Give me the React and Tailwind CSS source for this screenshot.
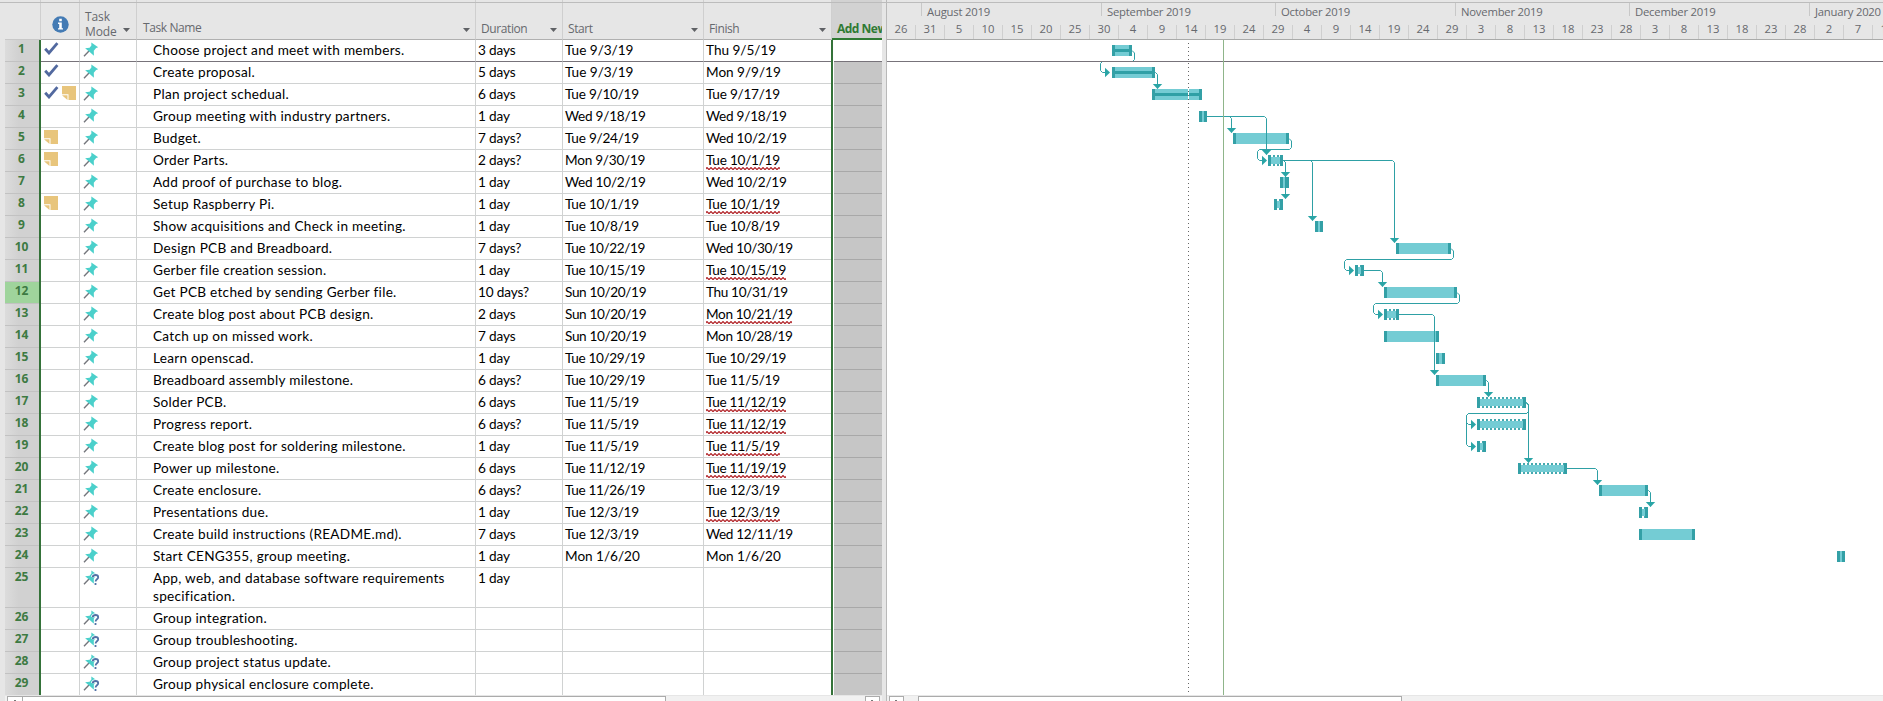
const TASKS = [
  ["Choose project and meet with members.", "3 days", "Tue 9/3/19", "Thu 9/5/19", "c"],
  ["Create proposal.", "5 days", "Tue 9/3/19", "Mon 9/9/19", "c"],
  ["Plan project schedual.", "6 days", "Tue 9/10/19", "Tue 9/17/19", "cn"],
  ["Group meeting with industry partners.", "1 day", "Wed 9/18/19", "Wed 9/18/19", ""],
  ["Budget.", "7 days?", "Tue 9/24/19", "Wed 10/2/19", "n"],
  ["Order Parts.", "2 days?", "Mon 9/30/19", "Tue 10/1/19", "nw"],
  ["Add proof of purchase to blog.", "1 day", "Wed 10/2/19", "Wed 10/2/19", ""],
  ["Setup Raspberry Pi.", "1 day", "Tue 10/1/19", "Tue 10/1/19", "nw"],
  ["Show acquisitions and Check in meeting.", "1 day", "Tue 10/8/19", "Tue 10/8/19", ""],
  ["Design PCB and Breadboard.", "7 days?", "Tue 10/22/19", "Wed 10/30/19", ""],
  ["Gerber file creation session.", "1 day", "Tue 10/15/19", "Tue 10/15/19", "w"],
  ["Get PCB etched by sending Gerber file.", "10 days?", "Sun 10/20/19", "Thu 10/31/19", ""],
  ["Create blog post about PCB design.", "2 days", "Sun 10/20/19", "Mon 10/21/19", "w"],
  ["Catch up on missed work.", "7 days", "Sun 10/20/19", "Mon 10/28/19", ""],
  ["Learn openscad.", "1 day", "Tue 10/29/19", "Tue 10/29/19", ""],
  ["Breadboard assembly milestone.", "6 days?", "Tue 10/29/19", "Tue 11/5/19", ""],
  ["Solder PCB.", "6 days", "Tue 11/5/19", "Tue 11/12/19", "w"],
  ["Progress report.", "6 days?", "Tue 11/5/19", "Tue 11/12/19", "w"],
  ["Create blog post for soldering milestone.", "1 day", "Tue 11/5/19", "Tue 11/5/19", "w"],
  ["Power up milestone.", "6 days", "Tue 11/12/19", "Tue 11/19/19", "w"],
  ["Create enclosure.", "6 days?", "Tue 11/26/19", "Tue 12/3/19", ""],
  ["Presentations due.", "1 day", "Tue 12/3/19", "Tue 12/3/19", "w"],
  ["Create build instructions (README.md).", "7 days", "Tue 12/3/19", "Wed 12/11/19", ""],
  ["Start CENG355, group meeting.", "1 day", "Mon 1/6/20", "Mon 1/6/20", ""],
  ["App, web, and database software requirements specification.", "1 day", "", "", "q"],
  ["Group integration.", "", "", "", "q"],
  ["Group troubleshooting.", "", "", "", "q"],
  ["Group project status update.", "", "", "", "q"],
  ["Group physical enclosure complete.", "", "", "", "q"],
];

// [row, start x, end x, style]
const BARS = [
  [1, 1112, 1132, "progress"], [2, 1112, 1155, "progress"], [3, 1152, 1202, "progress"],
  [4, 1199, 1207], [5, 1233, 1289], [6, 1268, 1283, "dotted"], [7, 1280, 1289],
  [8, 1274, 1283, "dotted"], [9, 1315, 1323], [10, 1396, 1451], [11, 1355, 1364, "dotted"],
  [12, 1384, 1457], [13, 1384, 1399, "dotted"], [14, 1384, 1439], [15, 1436, 1445],
  [16, 1436, 1486], [17, 1477, 1526, "dotted"], [18, 1477, 1526, "dotted"],
  [19, 1477, 1486, "dotted"], [20, 1518, 1567, "dotted"], [21, 1599, 1648],
  [22, 1639, 1648, "dotted"], [23, 1639, 1695], [24, 1837, 1845],
];

const mid = (row) => 50.5 + 22 * (row - 1);

// Finish-to-start links that turn down: [from row, from x, x, to row]
const DOWN = [
  [2, 1155, 1157.5, 3], [4, 1207, 1231.5, 5], [4, 1207, 1266.5, 6],
  [6, 1283, 1285.5, 7], [6, 1283, 1285.5, 8], [6, 1283, 1312.5, 9], [6, 1283, 1394.5, 10],
  [11, 1364, 1382.5, 12], [13, 1399, 1434.5, 16], [16, 1486, 1488.5, 17],
  [17, 1526, 1528.5, 20], [20, 1567, 1597.5, 21], [21, 1648, 1650.5, 22],
];

// Links that loop back: [from row, from x, right x, left x, to row]
const BACK = [
  [1, 1132, 1134.5, 1100.5, 2], [5, 1289, 1291.5, 1257.5, 6], [10, 1451, 1453.5, 1344.5, 11],
  [12, 1457, 1459.5, 1373.5, 13], [17, 1526, 1528.5, 1466.5, 18], [17, 1526, 1528.5, 1466.5, 19],
];

const DAYS = [26, 31, 5, 10, 15, 20, 25, 30, 4, 9, 14, 19, 24, 29, 4, 9, 14, 19, 24, 29, 3, 8, 13, 18, 23, 28, 3, 8, 13, 18, 23, 28, 2, 7, 12];
const MONTHS = [
  ["August 2019", "w-[180px]"], ["September 2019", "w-[174px]"], ["October 2019", "w-[180px]"],
  ["November 2019", "w-[174px]"], ["December 2019", "w-[180px]"], ["January 2020", "w-[74px]"],
];

const Caret = () => (
  <svg width="7" height="4" viewBox="0 0 7 4" className="shrink-0"><path d="M0 0h7L3.5 4z" fill="#5f6165" /></svg>
);

const Check = () => (
  <svg width="15" height="13" viewBox="0 0 15 13" className="shrink-0">
    <path d="M1.2 6.8 5 11 13.4 1.2" fill="none" stroke="#52699f" strokeWidth="2.8" />
  </svg>
);

const Note = () => (
  <svg width="14" height="14" viewBox="0 0 14 14" className="shrink-0">
    <path d="M0 0h14v14H6.5V8.2H0z" fill="#e8c57c" />
    <path d="M0 9.2h5.5v4.8z" fill="#e8c57c" />
  </svg>
);

const Pin = ({ query }) => (
  <svg width="17" height="16" viewBox="0 0 17 16" className="shrink-0">
    <path d="M1 14.2 6.2 8.8" stroke="#74767c" strokeWidth="1.4" />
    <path d="M8.3.4 15.2 5.3 13.1 6 10.8 8.8l.1 5-3.6-3.4-5.2-4.2 4.5-.5 1.8-2.2z" fill="#4bd0cb" />
    {query && (
      <path d="M9.6 7.2c.4-1.5 1.5-2.2 2.9-2.2 1.6 0 2.7.9 2.7 2.3 0 2-2.6 2-2.6 4.2M12.5 13v1.9" fill="none" stroke="#fff" strokeWidth="3.6" />
    )}
    {query && (
      <path d="M9.6 7.2c.4-1.5 1.5-2.2 2.9-2.2 1.6 0 2.7.9 2.7 2.3 0 2-2.6 2-2.6 4.2M12.5 13v1.9" fill="none" stroke="#5272a6" strokeWidth="1.8" />
    )}
  </svg>
);

const Info = () => (
  <svg width="17" height="17" viewBox="0 0 17 17">
    <circle cx="8.5" cy="8.5" r="8.2" fill="#447bb4" />
    <path d="M7.2 2.8h2.6v2.4H7.2zM6 6.6h3.8v5.6H11v1.4H6v-1.4h1.2V8H6z" fill="#fff" />
  </svg>
);

function Squiggle() {
  return (
    <svg className="absolute left-0 top-[16px] h-[3px] w-full">
      <defs>
        <pattern id="zigzag" width="4" height="3" patternUnits="userSpaceOnUse">
          <path d="M-1 2.6 1 .6 3 2.6 5 .6" fill="none" stroke="#b01f24" strokeWidth="1.25" />
        </pattern>
      </defs>
      <rect width="100%" height="3" fill="url(#zigzag)" />
    </svg>
  );
}

function Row({ task, n }) {
  const [name, duration, start, finish, flags] = task;
  const tall = n === 25;
  const line = n === 1 ? "border-b-[#77737a]" : n === 29 ? "border-b-transparent" : "border-b-[#d0d2d2]";
  const cell = `border-b ${line}`;
  const date = (d) => (d.length > 11 ? "tracking-[-0.36px]" : d.length > 10 ? "tracking-[-0.24px]" : "tracking-[-0.02px]");
  return (
    <div className={`flex shrink-0 ${tall ? "h-[40px]" : "h-[22px]"}`}>
      <div className={`w-[34px] border-b pr-px text-center font-['Open_Sans',sans-serif] text-[12px] font-bold leading-[18px] tracking-normal text-[#3d7a42] ${n === 12 ? "border-[#c2c2c2] bg-[#9fd49c]" : "border-[#c2c2c2] bg-linear-to-r from-[#dcdcdc] to-[#d1d1d1] to-40%"}`}>{n}</div>
      <div className="w-[2px] bg-[#347239]" />
      <div className={`flex w-[39px] gap-[3px] border-r border-r-[#d0d2d2] pl-[3px] pt-[2px] ${cell}`}>
        {flags.includes("c") && <Check />}
        {flags.includes("n") && <Note />}
      </div>
      <div className={`w-[57px] border-r border-r-[#d0d2d2] pl-[3px] pt-[2px] ${cell}`}><Pin query={flags.includes("q")} /></div>
      <div className={`w-[339px] border-r border-r-[#d0d2d2] pl-[16px] pr-[20px] pt-px tracking-[0.28px] ${cell}`}>{name}</div>
      <div className={`w-[87px] border-r border-r-[#d0d2d2] pl-[2px] pt-px tracking-[-0.15px] ${cell}`}>{duration}</div>
      <div className={`w-[141px] border-r border-r-[#d0d2d2] pl-[2px] pt-px ${date(start)} ${cell}`}>{start}</div>
      <div className={`w-[127px] pl-[2px] pt-px ${date(finish)} ${cell}`}>
        <span className="relative inline-block">{finish}{flags.includes("w") && <Squiggle />}</span>
      </div>
      <div className="w-[2px] bg-[#347239]" />
      <div className="w-px bg-white" />
      <div className={`w-[48px] border-b ${n === 1 ? "border-[#77737a] bg-white" : n === 29 ? "border-[#c6c6c6] bg-[#c6c6c6]" : "border-[#a8a8a8] bg-[#c6c6c6]"}`} />
    </div>
  );
}

function Table() {
  const head = "flex items-end justify-between border-r border-r-[#cfcfcf] border-b border-b-[#b0b0b0] text-[#66696e]";
  return (
    <div className="flex h-[701px] w-[882px] flex-col overflow-hidden">
      <div className="flex h-[40px] shrink-0 pl-[5px] font-['Open_Sans',sans-serif] text-[12px] leading-[15px] tracking-[-0.4px]">
        <div className="w-[36px] border-r border-r-[#cfcfcf] border-b border-b-[#c8c8c8]" />
        <div className={`${head} w-[39px]`}><div className="pb-[6px] pl-[11px]"><Info /></div></div>
        <div className={`${head} w-[57px] pb-0 pl-[5px] pr-[6px]`}><span className="tracking-[-0.1px]">Task<br />Mode</span><div className="pb-[7px]"><Caret /></div></div>
        <div className={`${head} w-[339px] pb-[4px] pl-[6px] pr-[5px]`}><span>Task Name</span><div className="pb-[3px]"><Caret /></div></div>
        <div className={`${head} w-[87px] pb-[3px] pl-[5px] pr-[5px]`}><span>Duration</span><div className="pb-[4px]"><Caret /></div></div>
        <div className={`${head} w-[141px] pb-[3px] pl-[5px] pr-[5px]`}><span>Start</span><div className="pb-[4px]"><Caret /></div></div>
        <div className={`${head} w-[128px] pb-[3px] pl-[5px] pr-[5px]`}><span>Finish</span><div className="pb-[4px]"><Caret /></div></div>
        <div className="flex w-[50px] items-end overflow-hidden whitespace-nowrap border-b-2 border-[#2f7a33] bg-[#d2d2d2] pb-[2px] pl-[5px] font-bold tracking-[-0.5px] text-[#2f7a33]">Add New</div>
      </div>
      <div className="ml-[5px] flex h-[655px] shrink-0 flex-col overflow-hidden bg-white font-[Lato,Carlito,sans-serif] text-[13.6px] leading-[18px] text-black">
        {TASKS.map((t, i) => <Row key={i} task={t} n={i + 1} />)}
      </div>
      <div className="ml-[5px] mt-px flex h-[5px] bg-[#f1f1f1] pl-[2px]">
        <div className="w-[16px] border border-b-0 border-[#ababab] bg-white pl-[6px] pt-[3px]"><div className="h-px w-[2px] bg-[#777]" /></div>
        <div className="w-[643px] border-r border-t border-[#ababab] bg-white" />
        <div className="ml-[199px] w-[15px] border border-b-0 border-[#ababab] bg-white pl-[5px] pt-[3px]"><div className="h-px w-[2px] bg-[#777]" /></div>
      </div>
    </div>
  );
}

function Bar({ bar: [row, x1, x2, kind] }) {
  const y = 45 + 22 * (row - 1);
  const gaps = [];
  if (kind === "dotted") for (let x = x1 + 3; x < x2 - 3; x += 4) gaps.push(x);
  return (
    <g shapeRendering="crispEdges">
      <rect x={x1} y={y} width={x2 - x1} height="11" fill="#74ccd4" />
      {kind === "dotted" && <path d={`M${x1 + 3} ${y + 1}H${x2 - 3}M${x1 + 3} ${y + 10}H${x2 - 3}`} stroke="#45a9af" strokeWidth="2" />}
      {gaps.map((x) => <path key={x} d={`M${x} ${y}h${Math.min(2, x2 - 3 - x)}v2H${x}zM${x} ${y + 9}h${Math.min(2, x2 - 3 - x)}v2H${x}z`} fill="#fff" />)}
      {kind === "progress" && <rect x={x1} y={y + 4} width={x2 - x1} height="3" fill="#2fa0a6" />}
      <path d={`M${x1} ${y}h3v11h-3zM${x2 - 3} ${y}h3v11h-3z`} fill="#33a0a6" />
    </g>
  );
}

function Chart() {
  return (
    <svg width="996" height="655" viewBox="887 40 996 655" className="block shrink-0 bg-white">
      {BARS.map((b, i) => <Bar key={i} bar={b} />)}
      <g fill="none" stroke="#2ea0a5" strokeWidth="1">
        {DOWN.map(([r, fx, x, to], i) => (
          <path key={i} d={`M${fx} ${mid(r)}H${x - 2}L${x} ${mid(r) + 2}V${mid(to) - 6}`} />
        ))}
        {BACK.map(([r, fx, rx, lx, to], i) => (
          <path key={i} d={`M${fx} ${mid(r)}L${rx} ${mid(r) + 2.5}V${mid(r) + 9}L${rx - 2} ${mid(r) + 11}H${lx + 2}L${lx} ${mid(r) + 13}V${mid(to) - 2}L${lx + 2} ${mid(to)}H${lx + 6}`} />
        ))}
      </g>
      <g fill="#2aa5a6">
        {DOWN.map(([, , x, to], i) => <path key={i} d={`M${x - 4.7} ${mid(to) - 10.5}h9.4l-4.7 5z`} />)}
        {BACK.map(([, , , lx, to], i) => <path key={i} d={`M${lx + 4.5} ${mid(to) - 4.7}v9.4l5-4.7z`} />)}
      </g>
      <path d="M1188.5 43V695" stroke="#fff" />
      <path d="M887 61.5H1883" stroke="#77737a" />
      <path d="M1188.5 43V695" stroke="#666" strokeDasharray="1 3" />
      <path d="M1223.5 40V695" stroke="#8fb58a" />
    </svg>
  );
}

function Gantt() {
  return (
    <div className="flex h-[701px] w-[996px] flex-col overflow-hidden">
      <div className="h-[40px] shrink-0 overflow-hidden border-b border-[#a9aaa9] font-['Open_Sans',sans-serif] text-[11.3px] text-[#66696e]">
        <div className="flex h-[18px] pl-[34px] pt-[3px]">
          {MONTHS.map(([m, w], i) => (
            <div key={i} className={`${w} h-[13px] shrink-0 whitespace-nowrap border-l border-[#c8c8c8] pl-[5px] leading-[18px] tracking-[-0.22px]`}>{m}</div>
          ))}
        </div>
        <div className="flex h-[22px] pt-[2px]">
          {DAYS.map((d, i) => (
            <div key={i} className="flex w-[29px] shrink-0 items-end text-center">
              <div className="w-[28px] self-start leading-[17px]">{d}</div>
              <div className="h-[15px] w-px bg-[#cfcfcf]" />
            </div>
          ))}
        </div>
      </div>
      <Chart />
      <div className="mt-px flex h-[5px] shrink-0 bg-[#f1f1f1] pl-[2px]">
        <div className="w-[15px] border border-b-0 border-[#ababab] bg-white pl-[5px] pt-[3px]"><div className="h-px w-[2px] bg-[#777]" /></div>
        <div className="ml-[14px] w-[484px] border border-b-0 border-[#ababab] bg-white" />
      </div>
    </div>
  );
}

export default function App() {
  return (
    <div className="relative flex h-[701px] w-[1883px] overflow-hidden bg-[#e6e6e6]">
      <Table />
      <div className="w-[5px] border-r border-[#b9b9b9] bg-[#e6e6e6]" />
      <Gantt />
      <div className="absolute left-0 top-[2px] h-px w-full bg-[#bcbcbc]" />
    </div>
  );
}
